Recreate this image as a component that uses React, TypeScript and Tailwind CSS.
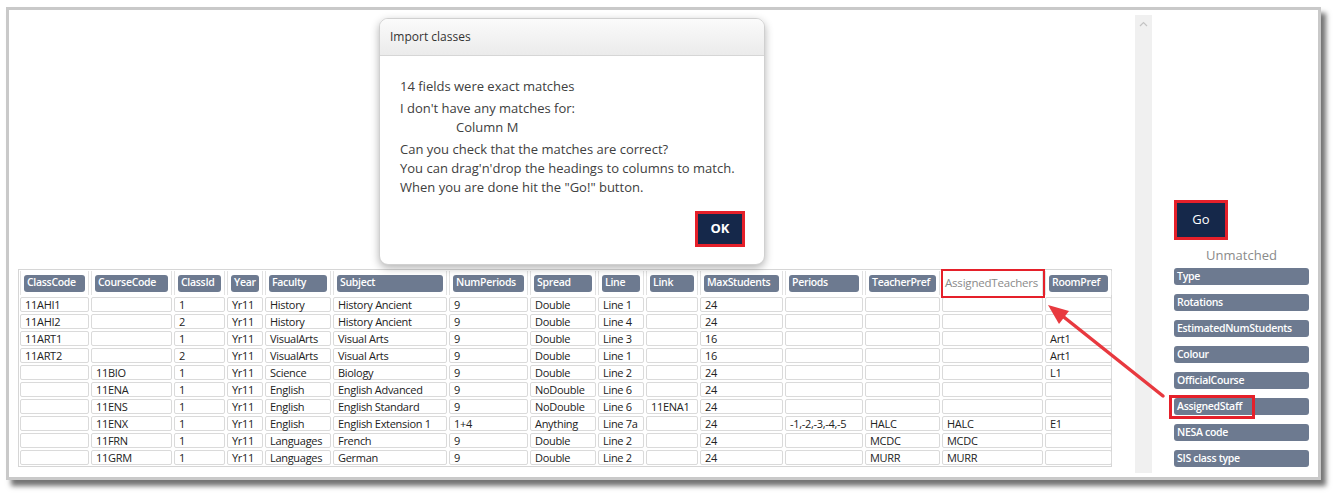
import React from 'react';

const FONT = "font-['Segoe_UI','Open_Sans','Noto_Sans',sans-serif]";

const headers = [
  'ClassCode', 'CourseCode', 'ClassId', 'Year', 'Faculty', 'Subject', 'NumPeriods', 'Spread',
  'Line', 'Link', 'MaxStudents', 'Periods', 'TeacherPref', 'AssignedTeachers', 'RoomPref',
];

const rows: string[][] = [
  ['11AHI1', '', '1', 'Yr11', 'History', 'History Ancient', '9', 'Double', 'Line 1', '', '24', '', '', '', ''],
  ['11AHI2', '', '2', 'Yr11', 'History', 'History Ancient', '9', 'Double', 'Line 4', '', '24', '', '', '', ''],
  ['11ART1', '', '1', 'Yr11', 'VisualArts', 'Visual Arts', '9', 'Double', 'Line 3', '', '16', '', '', '', 'Art1'],
  ['11ART2', '', '2', 'Yr11', 'VisualArts', 'Visual Arts', '9', 'Double', 'Line 1', '', '16', '', '', '', 'Art1'],
  ['', '11BIO', '1', 'Yr11', 'Science', 'Biology', '9', 'Double', 'Line 2', '', '24', '', '', '', 'L1'],
  ['', '11ENA', '1', 'Yr11', 'English', 'English Advanced', '9', 'NoDouble', 'Line 6', '', '24', '', '', '', ''],
  ['', '11ENS', '1', 'Yr11', 'English', 'English Standard', '9', 'NoDouble', 'Line 6', '11ENA1', '24', '', '', '', ''],
  ['', '11ENX', '1', 'Yr11', 'English', 'English Extension 1', '1+4', 'Anything', 'Line 7a', '', '24', '-1,-2,-3,-4,-5', 'HALC', 'HALC', 'E1'],
  ['', '11FRN', '1', 'Yr11', 'Languages', 'French', '9', 'Double', 'Line 2', '', '24', '', 'MCDC', 'MCDC', ''],
  ['', '11GRM', '1', 'Yr11', 'Languages', 'German', '9', 'Double', 'Line 2', '', '24', '', 'MURR', 'MURR', ''],
];

const unmatched = ['Type', 'Rotations', 'EstimatedNumStudents', 'Colour', 'OfficialCourse', 'AssignedStaff', 'NESA code', 'SIS class type'];

const GRID = 'grid grid-cols-[69px_81px_51px_36px_66px_114px_79px_66px_46px_52px_83px_78px_75px_101px_67px] gap-[2px]';

function ImportDialog() {
  return (
    <div className="absolute left-[370px] top-[8px] w-[386px] h-[247px] bg-white border border-[#d0d0d0] rounded-[9px] shadow-[0_3px_8px_rgba(0,0,0,0.3)] overflow-hidden">
      <div className="h-[37px] flex items-center pl-[10px] bg-gradient-to-b from-[#fbfbfb] to-[#ebebeb] border-b border-[#d6d6d6] text-[12px] text-[#333]">
        Import classes
      </div>
      <div className="pl-[20px] pr-4 pt-[21px] text-[13px] leading-[19px] text-[#404040]">
        <p>14 fields were exact matches</p>
        <p className="mt-[3px]">I don't have any matches for:</p>
        <p className="pl-[56px]">Column M</p>
        <p className="mt-[3px]">Can you check that the matches are correct?</p>
        <p>You can drag'n'drop the headings to columns to match.</p>
        <p>When you are done hit the "Go!" button.</p>
      </div>
      <div className="flex justify-end pr-[19px] mt-[14px]">
        <button className="w-[50px] h-[36px] border-[3px] border-[#e5202a] bg-[#15284a] text-white text-[13px] font-bold">
          OK
        </button>
      </div>
    </div>
  );
}

function ClassTable() {
  return (
    <div className="w-[1094px] border border-[#d6d6d6] p-[1px] text-[11px] tracking-[-0.3px] text-[#222]">
      <div className={`${GRID} h-[24px]`}>
        {headers.map(h =>
          h === 'AssignedTeachers' ? (
            <div key={h} className="relative flex items-center pl-[2px] text-[11.5px] tracking-[-0.2px] text-[#8a8a8a] border-x border-[#e2e2e2]">
              {h}
              <div className="absolute -left-[2px] -top-[2px] -right-[3px] -bottom-[3px] border-[2px] border-[#e5202a]" />
            </div>
          ) : (
            <div key={h} className="flex items-center px-[3px] border-x border-[#e2e2e2]">
              <div className="h-[17px] w-full flex items-center pl-[3px] rounded-[3px] bg-[#6d7a90] text-white font-semibold text-[10.5px] tracking-[-0.3px] whitespace-nowrap overflow-hidden">
                {h}
              </div>
            </div>
          )
        )}
      </div>
      {rows.map((r, i) => (
        <div key={i} className={`${GRID} mt-[2px]`}>
          {r.map((c, j) => (
            <div key={j} className="h-[15px] flex items-center pl-[4px] border border-[#dadada] rounded-[2px] leading-[13px] whitespace-nowrap">
              {c}
            </div>
          ))}
        </div>
      ))}
    </div>
  );
}

function RightPanel() {
  return (
    <div className="w-[166px] pt-[190px] pl-[22px] pr-[9px]">
      <button className="w-[54px] h-[40px] border-[3px] border-[#e5202a] bg-[#15284a] text-white text-[13px]">
        Go
      </button>
      <div className="mt-[7px] text-center text-[13px] leading-[17px] text-[#8a8a8a]">Unmatched</div>
      <div className="mt-[4px] flex flex-col gap-[9px]">
        {unmatched.map(u => (
          <div key={u} className="relative h-[17px] flex items-center pl-[3px] rounded-[3px] bg-[#6d7a90] text-white font-semibold text-[10.5px] tracking-[-0.3px]">
            {u}
            {u === 'AssignedStaff' && (
              <div className="absolute -left-[5px] -top-[3px] w-[86px] h-[24px] border-[3px] border-[#e5202a]" />
            )}
          </div>
        ))}
      </div>
    </div>
  );
}

export default function App() {
  return (
    <div className={`relative w-[1335px] h-[495px] bg-white ${FONT}`}>
      <div className="pt-[7px] pl-[6px]">
        <div className="w-[1315px] h-[473px] border-[3px] border-[#c9c9c9] bg-white shadow-[5px_6px_5px_rgba(0,0,0,0.55)] flex">
          <div className="relative w-[1126px] pt-[259px] pl-[9px]">
            <ClassTable />
            <ImportDialog />
          </div>
          <div className="w-[17px] mt-[5px] h-[458px] bg-[#f0f0f0] flex justify-center pt-[6px]">
            <svg width="9" height="6" viewBox="0 0 9 6">
              <path d="M1 5 L4.5 1.5 L8 5" fill="none" stroke="#c4c4c4" strokeWidth="1.2" />
            </svg>
          </div>
          <RightPanel />
        </div>
      </div>
      <svg className="absolute inset-0 pointer-events-none" width="1335" height="495">
        <line x1="1163" y1="396" x2="1060" y2="314" stroke="#e8393f" strokeWidth="3.5" strokeLinecap="round" />
        <polygon points="1048,305 1059,324 1069,311" fill="#e8393f" />
      </svg>
    </div>
  );
}
